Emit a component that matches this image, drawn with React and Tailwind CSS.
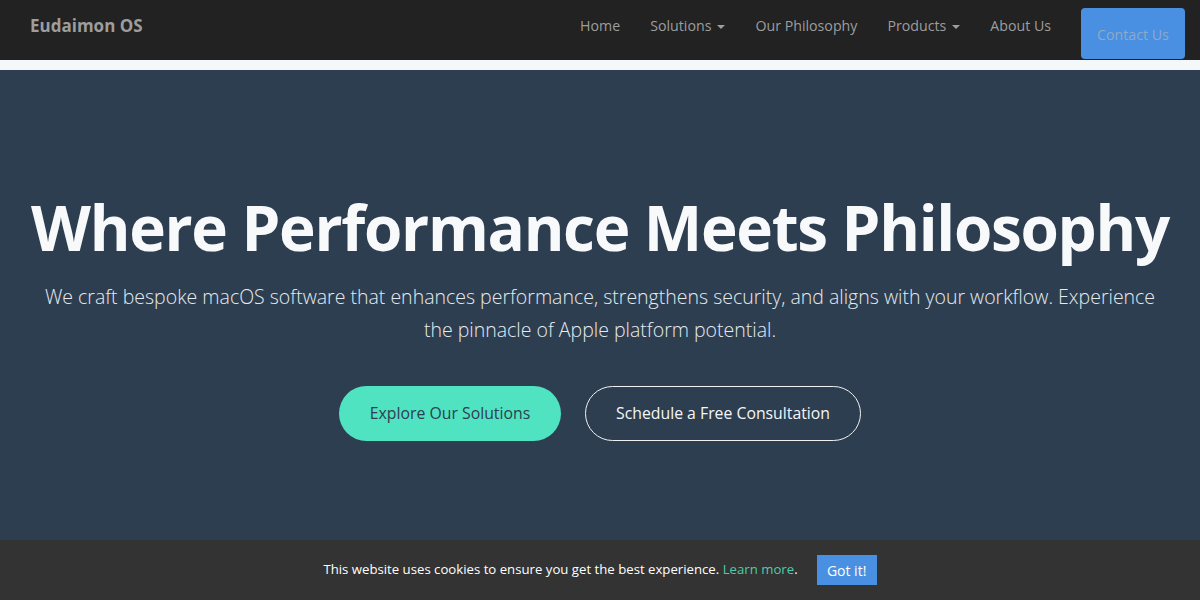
const navLinks = [
  { label: "Home" },
  { label: "Solutions", caret: true },
  { label: "Our Philosophy" },
  { label: "Products", caret: true },
  { label: "About Us" },
];

const Caret = () => (
  <span className="ml-[6px] inline-block h-0 w-0 border-x-[4px] border-t-[4px] border-x-transparent border-t-[#9d9d9d] align-middle" />
);

const App = () => {
  return (
    <div
      className="min-h-screen w-full bg-[#f4f8fb]"
      style={{ fontFamily: '"Open Sans", "Noto Sans", sans-serif' }}
    >
      {/* navbar */}
      <nav className="flex h-[60px] items-start justify-between bg-[#222222] pl-[30px] pr-[15px]">
        <a className="mt-[14px] text-[17px] font-bold leading-[24px] text-[#9d9d9d]">
          Eudaimon OS
        </a>
        <div className="flex items-start">
          <ul className="flex">
            {navLinks.map((link) => (
              <li key={link.label}>
                <a className="block px-[15px] pt-[14px] text-[14.2px] leading-[24px] text-[#9d9d9d]">
                  {link.label}
                  {link.caret && <Caret />}
                </a>
              </li>
            ))}
          </ul>
          <button className="ml-[15px] mt-[8px] h-[51px] w-[104px] rounded-[4px] bg-[#4a90e2] pt-[2px] text-[14.2px] text-[#8ea9c6]">
            Contact Us
          </button>
        </div>
      </nav>

      <div className="h-[10px] bg-[#f4f8fb]" />

      {/* hero */}
      <section className="flex h-[540px] flex-col items-center bg-[#2d3e50] px-[20px] pt-[122px] text-center">
        <h1 className="whitespace-nowrap text-[62px] font-bold leading-[70px] tracking-[-1.3px] text-[#f8f9fb]">
          Where Performance Meets Philosophy
        </h1>
        <p className="mt-[18px] max-w-[1130px] text-[19.5px] font-light leading-[33px] text-[#e6ebef]">
          We craft bespoke macOS software that enhances performance, strengthens security, and aligns with your
          workflow. Experience the pinnacle of Apple platform potential.
        </p>
        <div className="mt-[40px] flex gap-[24px]">
          <button className="h-[55px] w-[222px] rounded-full bg-[#50e3c2] text-[15.8px] text-[#2d3e50]">
            Explore Our Solutions
          </button>
          <button className="h-[55px] w-[276px] rounded-full border border-[#f1f1f1] text-[15.8px] text-[#f4f6f8]">
            Schedule a Free Consultation
          </button>
        </div>
      </section>

      {/* cookie bar */}
      <div className="fixed inset-x-0 bottom-0 flex h-[60px] items-center justify-center bg-[#333333] text-[13.2px] text-white">
        <span>
          This website uses cookies to ensure you get the best experience.{" "}
          <a className="text-[#4fcba7]">Learn more</a>.
        </span>
        <button className="ml-[19px] h-[30px] w-[60px] bg-[#4a90e2] text-[14px] text-white">Got it!</button>
      </div>
    </div>
  );
};

export default App;
